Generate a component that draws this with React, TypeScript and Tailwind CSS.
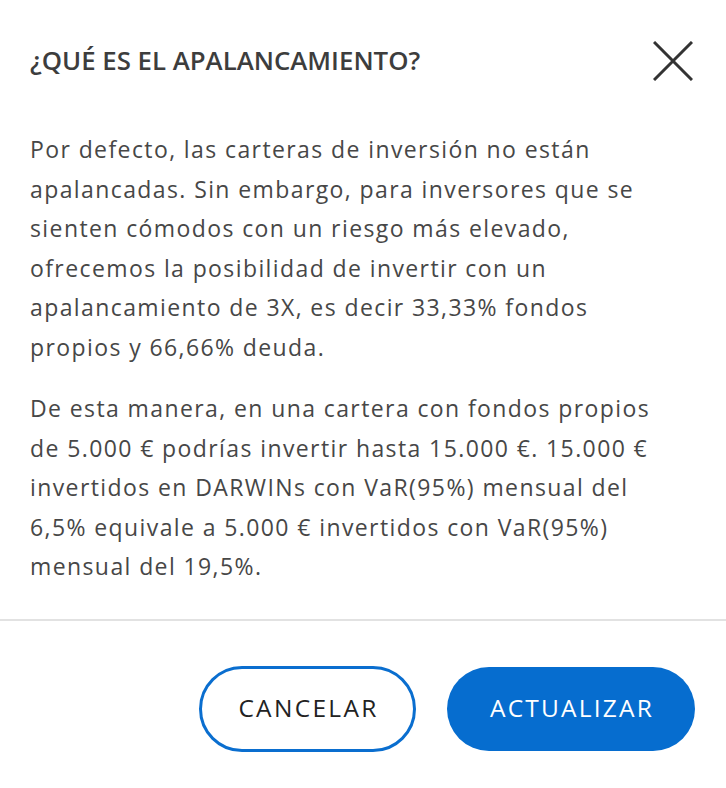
export default function App() {
  return (
    <div
      className="min-h-screen w-full bg-white"
      style={{ fontFamily: '"Open Sans", "Noto Sans", sans-serif' }}
    >
      <div className="flex items-center justify-between pl-[30px] pr-[33px] pt-[41px]">
        <h2 className="text-[25.8px] font-semibold leading-none text-[#3d3d3d]">
          ¿QUÉ ES EL APALANCAMIENTO?
        </h2>
        <button className="h-[40px] w-[40px] text-[#333333]" aria-label="Cerrar">
          <svg viewBox="0 0 40 40" className="h-[40px] w-[40px]">
            <path
              d="M1 1 L39 39 M39 1 L1 39"
              stroke="currentColor"
              strokeWidth="3"
              fill="none"
            />
          </svg>
        </button>
      </div>

      <div className="mt-[49px] space-y-[22px] pl-[30px] pr-[56px] text-[23px] leading-[39.5px] tracking-[1.4px] text-[#474747]">
        <p>
          Por defecto, las carteras de inversión no están apalancadas. Sin
          embargo, para inversores que se sienten cómodos con un riesgo más
          elevado, ofrecemos la posibilidad de invertir con un apalancamiento de
          3X, es decir 33,33% fondos propios y 66,66% deuda.
        </p>
        <p>
          De esta manera, en una cartera con fondos propios de 5.000 € podrías
          invertir hasta 15.000 €. 15.000 € invertidos en DARWINs con VaR(95%)
          mensual del 6,5% equivale a 5.000 € invertidos con VaR(95%) mensual
          del 19,5%.
        </p>
      </div>

      <div className="mt-[32px] h-[2px] w-full bg-[#e2e2e2]" />

      <div className="flex justify-end gap-[31px] pr-[31px] pt-[45px]">
        <button className="flex h-[86px] w-[217px] items-center justify-center rounded-full border-[3px] border-[#0a6ecf] bg-white pl-[2px] text-[24.5px] tracking-[2.3px] text-[#222222]">
          CANCELAR
        </button>
        <button className="flex h-[84px] w-[248px] items-center justify-center self-center rounded-full bg-[#066dcf] pl-[2px] text-[24.5px] tracking-[2.2px] text-white">
          ACTUALIZAR
        </button>
      </div>
    </div>
  );
}
